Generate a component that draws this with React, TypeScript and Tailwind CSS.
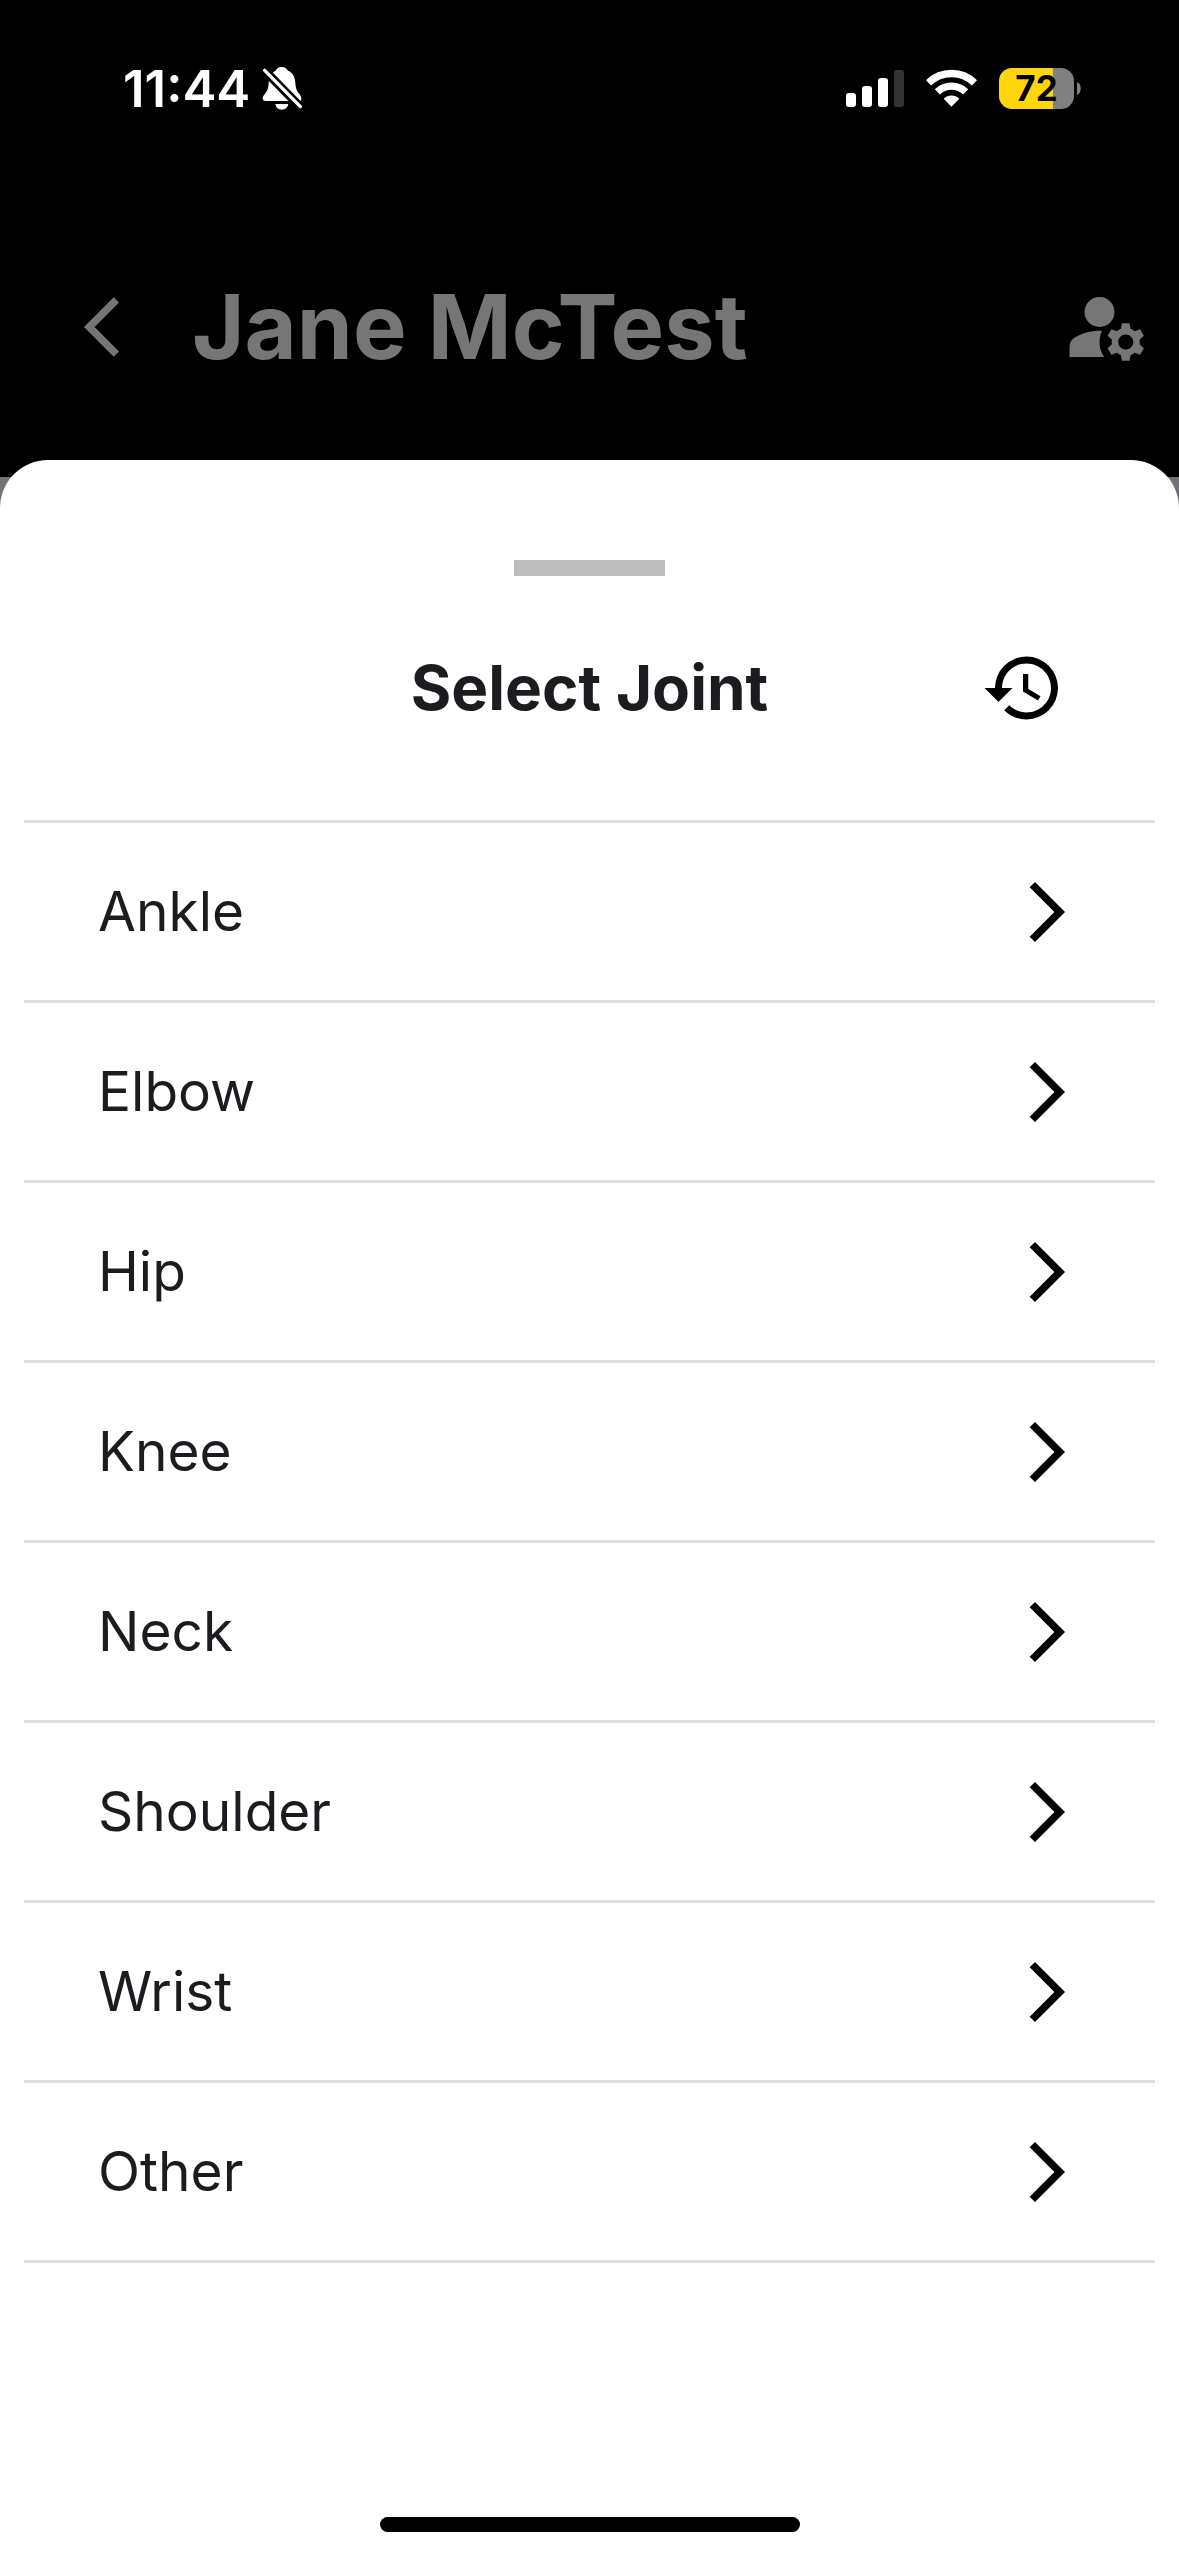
import React from 'react';
import { MdArrowBackIos, MdArrowForwardIos, MdHistory, MdManageAccounts } from 'react-icons/md';

const joints = ['Ankle', 'Elbow', 'Hip', 'Knee', 'Neck', 'Shoulder', 'Wrist', 'Other'];

const BellOffIcon = () => (
  <svg viewBox="0 0 120 132" className="w-10 h-11" aria-hidden="true">
    <path
      d="M59 3C70 3 75 9 78 14C93 20 99 34 100 50C101 68 105 76 113 85C117 90 118 94 118 98C118 103 115 105 110 105H11C5 105 2 102 2 97C2 92 5 88 9 83C17 74 19 66 20 50C21 34 27 20 41 14C44 8 49 3 59 3Z"
      fill="white"
    />
    <path d="M40 114H79C77 125 70 131 59 131C49 131 42 125 40 114Z" fill="white" />
    <path d="M-4 1L124 132" stroke="black" strokeWidth="26" />
    <path d="M8 13L115 122" stroke="white" strokeWidth="10" strokeLinecap="round" />
  </svg>
);

const SignalIcon = () => (
  <svg viewBox="0 0 58 37" className="w-[58px] h-[37px]" aria-hidden="true">
    <rect x="0" y="23" width="10" height="14" rx="3" fill="white" />
    <rect x="16" y="16" width="10" height="21" rx="3" fill="white" />
    <rect x="32" y="8" width="10" height="29" rx="3" fill="white" />
    <rect x="48" y="0" width="10" height="37" rx="3" fill="#333333" />
  </svg>
);

const WifiIcon = () => (
  <svg viewBox="0 0 153 114" className="w-[51px] h-[38px]" aria-hidden="true">
    <g fill="none" stroke="white" strokeWidth="22">
      <path d="M7.5 41.5A99 99 0 0 1 145.5 41.5" />
      <path d="M34 68.5A61 61 0 0 1 119 68.5" />
    </g>
    <path d="M76.5 113L53 89A34 34 0 0 1 100 89Z" fill="white" />
  </svg>
);

const Battery = () => (
  <div className="flex items-center gap-[3px]">
    <div className="flex h-[41px] w-[75px] items-center justify-center rounded-[13px] bg-[linear-gradient(to_right,#ffd60a_72%,#808080_72%)] text-[35px] leading-none font-bold text-black">
      72
    </div>
    <svg viewBox="0 0 4 13" className="w-1 h-[13px]" aria-hidden="true">
      <path d="M0 0C5 2 5 11 0 13Z" fill="#808080" />
    </svg>
  </div>
);

const StatusBar = () => (
  <div className="flex h-[176px] items-center justify-between pl-[123px] pr-[98px] text-white">
    <div className="flex items-center gap-3">
      <span className="text-[51px] leading-none font-semibold">11:44</span>
      <BellOffIcon />
    </div>
    <div className="flex items-center gap-[22px]">
      <SignalIcon />
      <WifiIcon />
      <Battery />
    </div>
  </div>
);

interface JointRowProps {
  name: string;
}

const JointRow = ({ name }: JointRowProps) => (
  <li className="border-b-[3px] border-[#dfdfdf]">
    <button type="button" className="flex h-[177px] w-full items-center justify-between pl-[74px] pr-[72px] text-left">
      <span className="text-[55px] leading-none">{name}</span>
      <MdArrowForwardIos size={72} className="text-black" />
    </button>
  </li>
);

export default function App() {
  return (
    <div className="flex min-h-screen flex-col bg-[#737078] font-['Inter',sans-serif]">
      <header className="bg-black">
        <StatusBar />
        <div className="flex h-[301px] items-center pl-[84px] pr-[27px] text-[#767676]">
          <button type="button" aria-label="Back">
            <MdArrowBackIos size={72} />
          </button>
          <h1 className="ml-9 flex-1 text-[90px] leading-none font-bold">Jane McTest</h1>
          <button type="button" aria-label="Manage account">
            <MdManageAccounts size={90} />
          </button>
        </div>
      </header>

      {/* Bottom sheet, overlapping the page header */}
      <main className="relative -mt-[17px] flex flex-1 flex-col rounded-t-[48px] bg-white px-6 pt-[100px] pb-6 text-[#1d1b20]">
        <div className="h-4 w-[151px] self-center bg-[#bdbdbd]" />
        <div className="mt-[70px] mb-[90px] grid grid-cols-[1fr_auto_1fr] items-center px-[90px]">
          <h2 className="col-start-2 text-[62px] leading-none font-bold">Select Joint</h2>
          <button type="button" aria-label="History" className="justify-self-end text-black">
            <MdHistory size={84} />
          </button>
        </div>
        <ul className="border-t-[3px] border-[#dfdfdf]">
          {joints.map((name) => (
            <JointRow key={name} name={name} />
          ))}
        </ul>
        <div className="mt-auto h-[15px] w-[420px] self-center rounded-full bg-black" />
      </main>
    </div>
  );
}
